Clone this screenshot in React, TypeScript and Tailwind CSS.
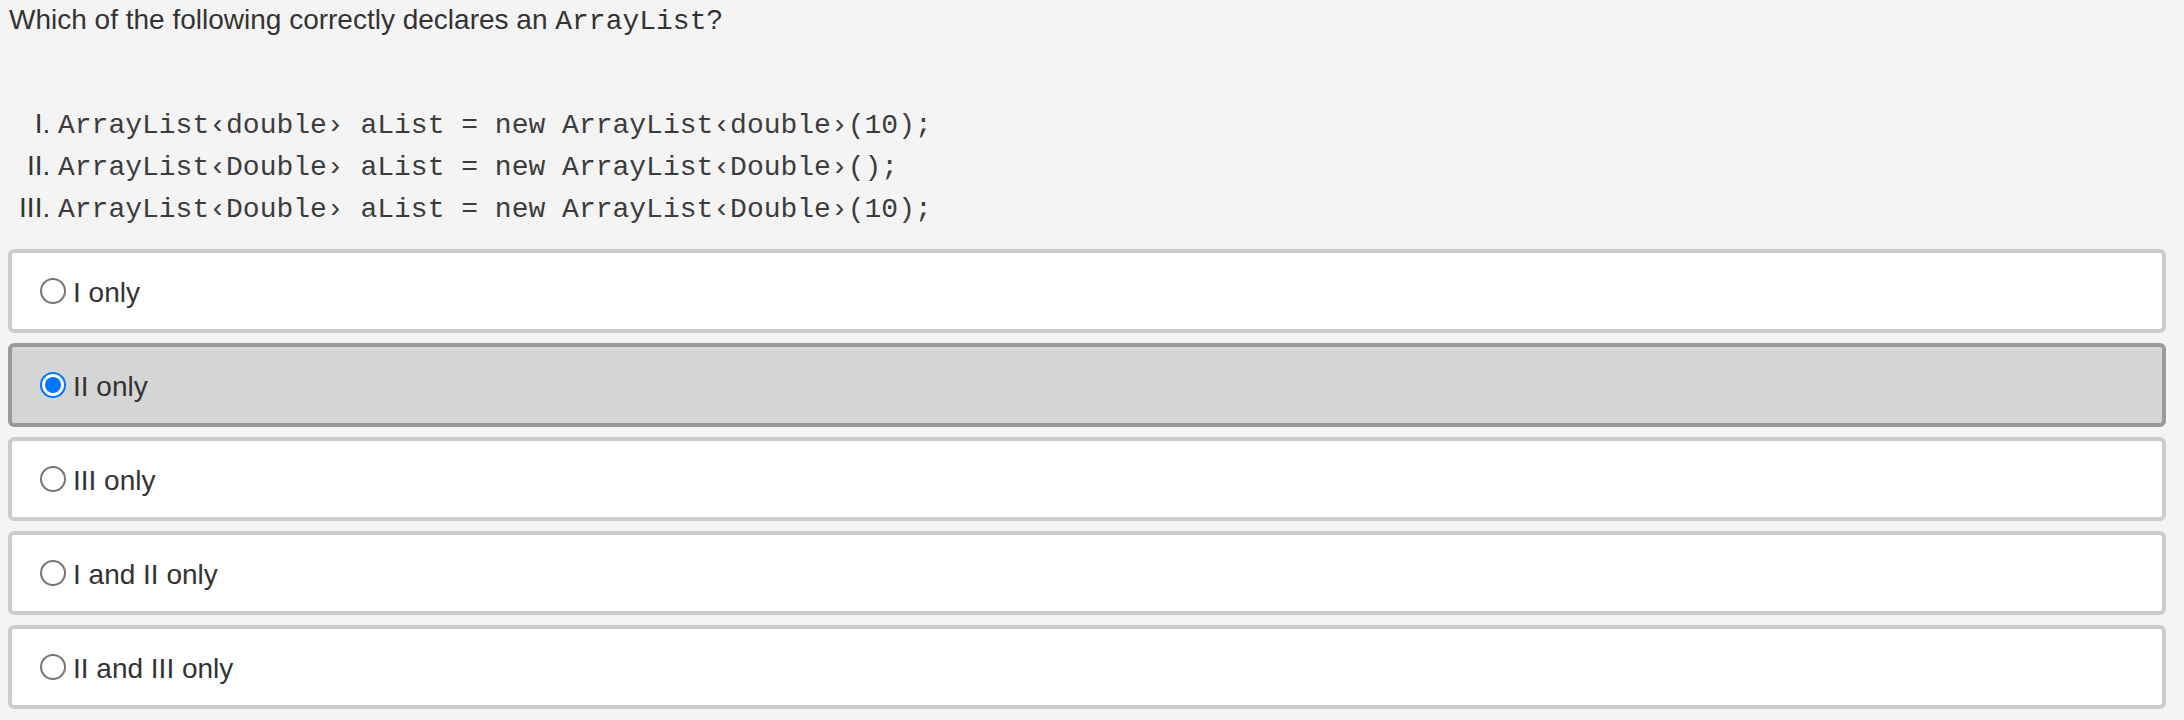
const mono = "font-['Liberation_Mono',monospace]";

const codeLines = [
  "ArrayList‹double› aList = new ArrayList‹double›(10);",
  "ArrayList‹Double› aList = new ArrayList‹Double›();",
  "ArrayList‹Double› aList = new ArrayList‹Double›(10);",
];

const choices = [
  { label: "I only", checked: false },
  { label: "II only", checked: true },
  { label: "III only", checked: false },
  { label: "I and II only", checked: false },
  { label: "II and III only", checked: false },
];

function Radio({ checked }: { checked: boolean }) {
  if (checked) {
    return (
      <span className="flex h-[26px] w-[26px] shrink-0 items-center justify-center rounded-full border-2 border-[#0075ff] bg-white">
        <span className="h-[16px] w-[16px] rounded-full bg-[#0075ff]" />
      </span>
    );
  }
  return (
    <span className="h-[26px] w-[26px] shrink-0 rounded-full border-2 border-[#767676] bg-white" />
  );
}

function Choice({ label, checked }: { label: string; checked: boolean }) {
  return (
    <label
      className={
        checked
          ? "flex h-[84px] items-center gap-[7px] rounded-[6px] border-4 border-[#9a9a9a] bg-[#d5d5d5] pl-[28px]"
          : "flex h-[84px] items-center gap-[7px] rounded-[6px] border-4 border-[#cccccc] bg-white pl-[28px]"
      }
    >
      <Radio checked={checked} />
      <span className="pt-[4px]">{label}</span>
    </label>
  );
}

export default function App() {
  return (
    <div className="h-[720px] w-full bg-[#f4f4f4] pr-[18px] pl-[8px] font-['Liberation_Sans',Arial,sans-serif] text-[28px] leading-[40px] text-[#333333]">
      <p className="pl-[1px]">
        Which of the following correctly declares an{" "}
        <span className={mono}>ArrayList</span>?
      </p>
      <ol className="mt-[61px] list-[upper-roman] pl-[50px] leading-[42px]">
        {codeLines.map((line) => (
          <li key={line}>
            <span className={`${mono} leading-none whitespace-pre text-[#3c3c3c]`}>{line}</span>
          </li>
        ))}
      </ol>
      <div className="mt-[20px] flex flex-col gap-[10px]">
        {choices.map((c) => (
          <Choice key={c.label} label={c.label} checked={c.checked} />
        ))}
      </div>
    </div>
  );
}
